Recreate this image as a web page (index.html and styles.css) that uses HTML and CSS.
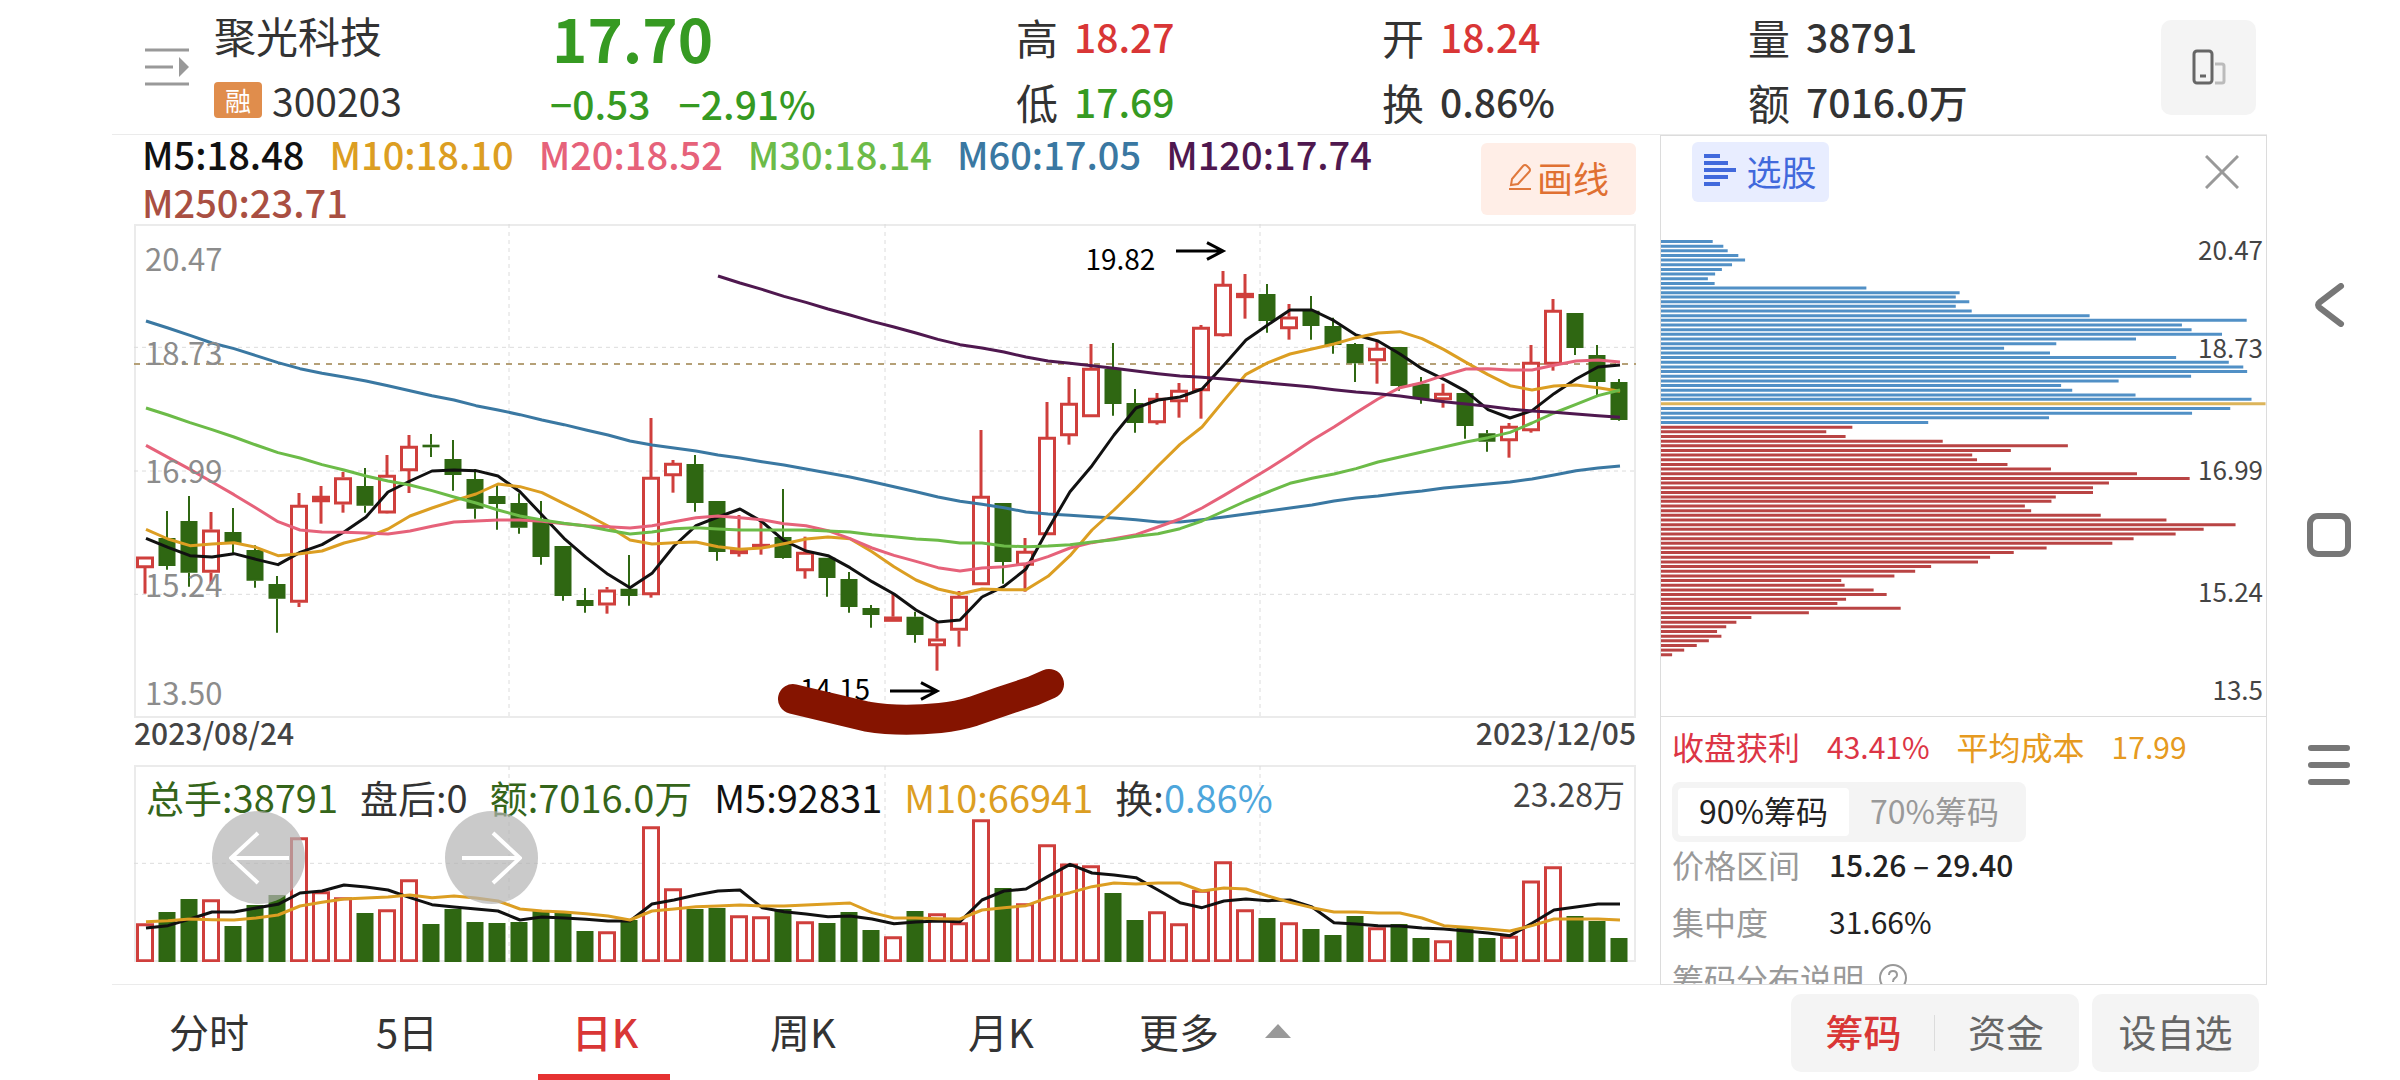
FILE: index.html
```html
<!DOCTYPE html>
<html lang="zh-CN">
<head>
	<meta charset="UTF-8">
	<meta name="viewport" content="width=device-width, initial-scale=1.0">
	<title>聚光科技 300203</title>
	<link rel="stylesheet" href="styles.css">
</head>
<body>
	<div class="app">
		<header class="quote">
			<button class="list-btn" aria-label="列表">
				<svg width="44" height="38" viewBox="0 0 44 38" fill="none" stroke="#999" stroke-width="3">
					<path d="M0 2H44M0 19H28M0 36H44"/>
					<path d="M34 9L44 19L34 29Z" fill="#999" stroke="none"/>
				</svg>
			</button>
			<div class="stock">
				<div class="stock-name">聚光科技</div>
				<div class="stock-code"><span class="tag">融</span>300203</div>
			</div>
			<div class="price">
				<div class="price-now">17.70</div>
				<div class="price-change"><span>−0.53</span><span>−2.91%</span></div>
			</div>
			<dl class="stat">
				<div><dt>高</dt><dd class="up">18.27</dd></div>
				<div><dt>低</dt><dd class="down">17.69</dd></div>
			</dl>
			<dl class="stat">
				<div><dt>开</dt><dd class="up">18.24</dd></div>
				<div><dt>换</dt><dd>0.86%</dd></div>
			</dl>
			<dl class="stat">
				<div><dt>量</dt><dd>38791</dd></div>
				<div><dt>额</dt><dd>7016.0万</dd></div>
			</dl>
			<button class="rotate-btn" aria-label="竖屏">
				<svg width="34" height="36" viewBox="0 0 34 36" fill="none" stroke-width="3">
					<rect x="2" y="2" width="18" height="32" rx="3" stroke="#666"/>
					<path d="M8 27H14" stroke="#666"/>
					<path d="M23 15H30Q32 15 32 17V32Q32 34 30 34H23" stroke="#bbb"/>
				</svg>
			</button>
		</header>

		<main class="charts">
			<div class="legend">
				<div class="legend-list">
					<span class="ma5">M5:18.48</span>
					<span class="ma10">M10:18.10</span>
					<span class="ma20">M20:18.52</span>
					<span class="ma30">M30:18.14</span>
					<span class="ma60">M60:17.05</span>
					<span class="ma120">M120:17.74</span>
					<span class="ma250">M250:23.71</span>
				</div>
				<button class="draw-btn">
					<svg width="24" height="28" viewBox="0 0 24 28" fill="none" stroke="#e0783c" stroke-width="2">
						<path d="M3 22L4 16L15 3Q17 1 19 3L21 5Q23 7 21 9L10 21Z"/>
						<path d="M1 26H23"/>
					</svg>
					画线
				</button>
			</div>

			<div class="kline">
				<svg id="kline" viewBox="0 12 1502 1482" preserveAspectRatio="none"></svg>
				<span class="axis axis1">20.47</span>
				<span class="axis axis2">18.73</span>
				<span class="axis axis3">16.99</span>
				<span class="axis axis4">15.24</span>
				<span class="axis axis5">13.50</span>
				<span class="mark mark-high">19.82</span>
				<span class="mark mark-low">14.15</span>
				<svg class="brush" viewBox="0 12 1502 1482" preserveAspectRatio="none">
					<path d="M659 1437L733 1490Q765 1506 806 1494Q824 1488 839 1474L866 1446L899 1413L915 1392"/>
				</svg>
			</div>
			<div class="dates"><span>2023/08/24</span><span>2023/12/05</span></div>

			<div class="volume">
				<svg id="volume" viewBox="0 75 1502 591" preserveAspectRatio="none"></svg>
				<div class="volume-legend">
					<span class="vol-green">总手:38791</span>
					<span>盘后:0</span>
					<span class="vol-green">额:7016.0万</span>
					<span class="ma5">M5:92831</span>
					<span class="ma10">M10:66941</span>
					<span>换:<span class="vol-rate">0.86%</span></span>
					<span class="volume-max">23.28万</span>
				</div>
				<button class="step step-prev" aria-label="向左">
					<svg width="60" height="54" viewBox="0 0 60 54" fill="none" stroke="#fff" stroke-width="4"><path d="M60 27H2M29 2L2 27L29 52"/></svg>
				</button>
				<button class="step step-next" aria-label="向右">
					<svg width="60" height="54" viewBox="0 0 60 54" fill="none" stroke="#fff" stroke-width="4"><path d="M0 27H58M31 2L58 27L31 52"/></svg>
				</button>
			</div>
		</main>

		<aside class="chips">
			<div class="chips-chart">
				<svg id="chips" viewBox="41 405 1252 1743" preserveAspectRatio="none"></svg>
				<div class="chips-top">
					<button class="pick-btn">
						<svg width="32" height="32" viewBox="0 0 32 32" stroke="#4169dc" stroke-width="4"><path d="M0 2H16M0 9H24M0 16H32M0 23H24M0 30H16"/></svg>
						选股
					</button>
					<button class="close-btn" aria-label="关闭">
						<svg width="34" height="34" viewBox="0 0 34 34" stroke="#999" stroke-width="3"><path d="M1 1L33 33M33 1L1 33"/></svg>
					</button>
				</div>
				<span class="chip-axis axis1">20.47</span>
				<span class="chip-axis axis2">18.73</span>
				<span class="chip-axis axis3">16.99</span>
				<span class="chip-axis axis4">15.24</span>
				<span class="chip-axis axis5">13.5</span>
			</div>
			<div class="chips-info">
				<div class="chips-sum">
					<span class="profit">收盘获利</span><span class="profit num">43.41%</span>
					<span class="cost">平均成本</span><span class="cost num">17.99</span>
				</div>
				<div class="segment">
					<button class="on">90%筹码</button>
					<button>70%筹码</button>
				</div>
				<dl class="chips-rows">
					<dt>价格区间</dt><dd class="strong">15.26 – 29.40</dd>
					<dt>集中度</dt><dd>31.66%</dd>
				</dl>
				<div class="chips-help">筹码分布说明
					<svg width="30" height="30" viewBox="0 0 30 30" fill="none" stroke="#999" stroke-width="2"><circle cx="15" cy="15" r="13"/><path d="M11 12Q11 8 15 8Q19 8 19 12Q19 14 17 15Q15 16 15 19M15 21V23"/></svg>
				</div>
			</div>
		</aside>

		<footer class="bottom">
			<nav class="tabs">
				<button>分时</button>
				<button>5日</button>
				<button class="on">日K</button>
				<button>周K</button>
				<button>月K</button>
				<button class="more">更多
					<svg width="26" height="14" viewBox="0 0 26 14"><path d="M13 0L26 14H0Z" fill="#999"/></svg>
				</button>
			</nav>
			<div class="pair">
				<button class="on">筹码</button>
				<button>资金</button>
			</div>
			<button class="watch-btn">设自选</button>
		</footer>

		<nav class="sysnav">
			<button aria-label="返回"><svg width="44" height="44" viewBox="0 0 44 44"><path d="M34 3L13 19Q9 22 13 25L34 41"/></svg></button>
			<button aria-label="主页"><svg width="44" height="44" viewBox="0 0 44 44"><rect x="3" y="3" width="38" height="38" rx="8"/></svg></button>
			<button aria-label="任务"><svg width="44" height="44" viewBox="0 0 44 44"><path d="M4 5H40M4 22H40M4 39H40"/></svg></button>
		</nav>
	</div>
	<script src="script.js"></script>
</body>
</html>
```
FILE: styles.css
```css
* {
	box-sizing: border-box;
}
body {
	margin: 0;
	background: #fff;
	color: #333;
	font-family: "Noto Sans CJK SC", "Noto Sans", sans-serif;
}
button {
	border: none;
	padding: 0;
	background: none;
	color: inherit;
	font: inherit;
	display: flex;
	align-items: center;
	justify-content: center;
}
dl, dd {
	margin: 0;
}
svg {
	display: block;
	flex: none;
}

.app {
	display: grid;
	grid-template-columns: minmax(0, 1fr) 607px 133px;
	grid-template-areas:
		"quote quote sys"
		"charts chips sys"
		"bottom bottom sys";
	padding-left: 112px;
	min-height: 100vh;
	grid-template-rows: 135px 850px auto;
}

/* header */
.quote {
	grid-area: quote;
	display: flex;
	align-items: center;
	border-bottom: 1px solid #ebebeb;
	padding: 0 11px 0 33px;
}
.list-btn {
	width: 44px;
	margin-right: 25px;
}
.stock {
	width: 336px;
}
.stock-name {
	font-size: 42px;
	line-height: 66px;
}
.stock-code {
	display: flex;
	align-items: center;
	gap: 10px;
	font-size: 39px;
	line-height: 64px;
}
.tag {
	width: 48px;
	height: 36px;
	border-radius: 4px;
	background: #e08d4c;
	color: #fff;
	font-size: 26px;
	line-height: 36px;
	text-align: center;
}
.price {
	width: 466px;
	color: #369a22;
	font-weight: 500;
}
.price-now {
	font-size: 60px;
	font-weight: 700;
	line-height: 72px;
	padding-left: 2px;
}
.price-change {
	display: flex;
	gap: 28px;
	font-size: 39px;
	line-height: 60px;
}
.stat {
	width: 366px;
	padding-top: 4px;
}
.stat div {
	display: flex;
	align-items: center;
	gap: 16px;
	font-size: 39px;
	line-height: 65px;
}
.stat dt {
	font-size: 42px;
}
.stat dd {
	font-weight: 500;
}
.up {
	color: #d93636;
}
.down {
	color: #369a22;
}
.rotate-btn {
	width: 95px;
	height: 95px;
	margin-left: auto;
	border-radius: 10px;
	background: #f4f4f4;
}

/* left charts */
.charts {
	grid-area: charts;
	padding: 0 24px 0 22px;
	border-bottom: 1px solid #ebebeb;
}
.legend {
	display: flex;
	justify-content: space-between;
	height: 89px;
	padding-left: 8px;
}
.legend-list {
	display: flex;
	flex-wrap: wrap;
	column-gap: 25px;
	width: 1280px;
	font-size: 38px;
	font-weight: 500;
	line-height: 48px;
	margin-top: -5px;
}
.ma5 { color: #111; }
.ma10 { color: #dc9e22; }
.ma20 { color: #e6627a; }
.ma30 { color: #6cbb48; }
.ma60 { color: #3a78a2; }
.ma120 { color: #4f184f; }
.ma250 { color: #a94f42; }
.draw-btn {
	width: 155px;
	height: 72px;
	margin-top: 8px;
	padding-bottom: 4px;
	gap: 5px;
	border-radius: 6px;
	background: #ffeee7;
	color: #e07032;
	font-size: 36px;
}
.kline, .volume {
	position: relative;
}
.kline {
	height: 494px;
}
.kline svg, .volume > svg {
	width: 100%;
	height: 100%;
}
.axis, .mark, .chip-axis {
	position: absolute;
	line-height: 28px;
}
.axis {
	left: 11px;
	color: #8c8c8c;
	font-size: 31px;
}
.kline .axis1 { top: 4%; }
.kline .axis2 { top: 23%; }
.kline .axis3 { top: 47%; }
.kline .axis4 { top: 70%; }
.kline .axis5 { top: 92%; }
.mark {
	right: 32%;
	color: #000;
	font-size: 28px;
}
.mark-high {
	top: 4%;
}
.mark-low {
	right: 51%;
	top: 91%;
}
.kline .brush {
	position: absolute;
	inset: 0;
	overflow: visible;
	pointer-events: none;
	fill: none;
	stroke: #851400;
	stroke-width: 30px;
	stroke-linecap: round;
	stroke-linejoin: round;
}
.dates {
	display: flex;
	justify-content: space-between;
	height: 47px;
	font-size: 30px;
	font-weight: 500;
	line-height: 28px;
	color: #444;
}
.volume {
	height: 197px;
}
.volume-legend {
	position: absolute;
	top: 5px;
	left: 12px;
	right: 11px;
	display: flex;
	gap: 22px;
	font-size: 38px;
	line-height: 54px;
}
.vol-green { color: #35651a; }
.vol-rate { color: #4da6dc; }
.volume-max {
	margin-left: auto;
	font-size: 32px;
	line-height: 46px;
	color: #444;
}
.step {
	position: absolute;
	top: 46px;
	width: 93px;
	height: 93px;
	border-radius: 50%;
	background: rgba(180, 180, 180, 0.7);
}
.step-prev { left: 78px; }
.step-next { left: 311px; }

/* svg parts */
svg path, svg rect, svg line, svg polyline {
	vector-effect: non-scaling-stroke;
}
.frame, .grid {
	fill: none;
	stroke: #ebebeb;
	stroke-width: 2;
}
.grid {
	stroke: #dcdcdc;
	stroke-width: 1;
	stroke-dasharray: 4 4;
}
.last {
	stroke: #b5a077;
	stroke-width: 2;
	stroke-dasharray: 6 6;
}
.r {
	fill: #fff;
	stroke: #cf3f3c;
	stroke-width: 3;
}
.r.flat {
	fill: #e03030;
}
.g {
	fill: #2f6712;
	stroke: #2f6712;
	stroke-width: 2;
}
.line {
	fill: none;
	stroke: currentColor;
	stroke-width: 3;
	stroke-linejoin: round;
}
.arrow {
	fill: none;
	stroke: #000;
	stroke-width: 3;
}
.bar-blue { stroke: #5190c6; }
.bar-gold { stroke: #dcb45a; }
.bar-red { stroke: #b94444; }
.bar-blue, .bar-gold, .bar-red {
	stroke-width: 3;
}

/* right panel */
.chips {
	grid-area: chips;
	display: flex;
	flex-direction: column;
	border: 1px solid #dcdcdc;
}
.chips-chart {
	position: relative;
	height: 580px;
}
.chips-chart > svg {
	position: absolute;
	width: 100%;
	height: 100%;
}
.chips-top {
	position: relative;
	display: flex;
	justify-content: space-between;
	padding: 6px 27px 0 31px;
}
.pick-btn {
	width: 137px;
	height: 60px;
	gap: 10px;
	padding-bottom: 4px;
	border-radius: 6px;
	background: #e8edff;
	color: #4169dc;
	font-size: 35px;
}
.chip-axis {
	right: 3px;
	font-size: 26px;
	color: #444;
}
.chips .axis1 { top: 17%; }
.chips .axis2 { top: 34%; }
.chips .axis3 { top: 55%; }
.chips .axis4 { top: 76%; }
.chips .axis5 { top: 93%; }
.chips-info {
	flex: 1;
	height: 0;
	overflow: hidden;
	border-top: 1px solid #dcdcdc;
	padding-left: 11px;
	font-size: 32px;
}
.chips-sum {
	display: flex;
	line-height: 58px;
}
.chips-sum span {
	margin-right: 27px;
}
.chips-sum .num {
	font-size: 30px;
}
.profit { color: #dc3545; }
.cost { color: #e69a20; }
.segment {
	display: flex;
	width: 354px;
	height: 60px;
	margin-top: 7px;
	padding: 6px;
	border-radius: 8px;
	background: #f4f4f4;
	color: #999;
}
.segment button {
	flex: 1;
	padding-bottom: 4px;
	border-radius: 4px;
}
.segment .on {
	background: #fff;
	color: #222;
}
.chips-rows {
	display: grid;
	grid-template-columns: 157px 1fr;
	line-height: 57px;
	margin-top: -6px;
}
.chips-rows dt, .chips-help {
	color: #999;
}
.chips-rows dd {
	color: #222;
	font-size: 30px;
}
.chips-rows .strong {
	font-weight: 500;
}
.chips-help {
	display: flex;
	align-items: center;
	gap: 14px;
	line-height: 56px;
}

/* bottom bar */
.bottom {
	grid-area: bottom;
	display: flex;
	align-items: center;
	padding-right: 8px;
	font-size: 38px;
}
.bottom button {
	padding-bottom: 4px;
}
.tabs {
	display: flex;
	align-self: stretch;
	margin-right: auto;
	margin-left: -2px;
	font-size: 40px;
}
.tabs button {
	position: relative;
	width: 198px;
}
.tabs .on, .pair .on {
	color: #d93636;
	font-weight: 500;
}
.tabs .on::after {
	content: "";
	position: absolute;
	left: 32px;
	right: 34px;
	bottom: 0;
	height: 6px;
	background: #e63232;
}
.tabs .more {
	width: 230px;
	gap: 46px;
}
.pair, .watch-btn {
	height: 78px;
	border-radius: 10px;
	background: #f4f4f4;
	color: #666;
}
.pair {
	display: flex;
	align-items: center;
	margin-right: 13px;
	padding: 0 2px;
}
.pair button {
	width: 142px;
	height: 36px;
}
.pair .on {
	border-right: 1px solid #dcdcdc;
}
.watch-btn {
	width: 167px;
}

/* system keys */
.sysnav {
	grid-area: sys;
	display: flex;
	flex-direction: column;
	align-items: center;
	justify-content: center;
	gap: 186px;
	padding: 0 10px 10px 0;
}
.sysnav svg {
	fill: none;
	stroke: #777;
	stroke-width: 6;
	stroke-linecap: round;
}
```
FILE: script.js
```js
// colour, high, body top, body bottom, low
var candles = [
	['r',1010,1010,1044,1121], ['g',873,954,1038,1049], ['g',828,903,1058,1100], ['r',876,929,1058,1093],
	['g',864,936,970,1000], ['g',976,990,1082,1103], ['g',1068,1092,1136,1238], ['r',819,855,1148,1161],
	['r',798,828,846,911], ['r',756,772,853,878], ['g',744,798,857,878], ['r',705,765,880,881],
	['r',645,678,753,819], ['g',642,674,682,711], ['g',660,717,765,812], ['g',747,777,866,896],
	['g',795,828,852,929], ['g',820,849,923,941], ['g',843,899,1011,1034], ['g',978,978,1128,1142],
	['g',1104,1140,1158,1178], ['r',1101,1109,1156,1181], ['g',1005,1106,1128,1157], ['r',594,771,1125,1133],
	['r',720,729,768,818], ['g',705,732,849,875], ['g',843,843,996,1022], ['r',885,988,1002,1010],
	['r',905,972,984,1004], ['g',807,951,1014,1016], ['r',950,996,1053,1076], ['g',1013,1013,1074,1130],
	['g',1056,1077,1161,1178], ['g',1155,1164,1185,1223], ['r',1120,1190,1205,1205], ['g',1175,1190,1245,1268],
	['r',1208,1256,1278,1352], ['r',1113,1128,1232,1280], ['r',630,828,1095,1095], ['g',849,849,1026,1091],
	['r',954,993,1037,1115], ['r',546,651,945,945], ['r',471,549,648,674], ['r',372,444,591,591],
	['g',369,447,552,587], ['g',507,549,609,638], ['r',519,534,609,614], ['r',489,510,546,593],
	['r',315,321,513,596], ['r',153,192,348,350], ['r',162,219,234,296], ['g',192,222,303,338],
	['r',252,290,327,359], ['g',228,272,318,359], ['g',293,318,375,401], ['g',369,372,430,486],
	['r',366,384,423,491], ['g',381,381,498,512], ['g',471,491,537,551], ['r',491,519,540,563],
	['g',519,519,618,656], ['g',630,640,665,695], ['r',609,618,663,713], ['r',375,426,633,638],
	['r',237,270,434,452], ['g',279,279,384,405], ['g',375,405,486,525], ['g',477,486,600,602]
];
var averages = {
	ma60: [303,324,346,369,386,407,428,446,460,471,483,497,512,527,540,557,570,584,600,614,630,645,663,675,684,693,705,714,725,735,747,759,771,785,800,815,831,844,853,863,876,882,886,890,894,899,906,906,899,891,882,873,864,855,843,834,828,820,813,804,798,792,786,777,765,752,744,738],
	ma5: [955,982,1007,1011,1001,1018,1034,997,974,936,891,816,783,753,750,752,768,815,885,955,1012,1063,1103,1060,978,917,891,867,905,962,993,1007,1043,1085,1122,1170,1206,1200,1131,1099,1047,928,815,737,645,564,540,531,507,435,360,314,270,270,302,345,363,402,446,478,514,569,594,572,521,477,441,435],
	ma10: [928,957,977,972,968,982,1007,1001,993,969,953,927,888,864,842,822,792,800,818,851,883,918,960,972,968,966,980,988,984,971,957,951,956,995,1040,1080,1107,1122,1107,1109,1109,1069,1007,930,870,806,738,673,621,541,463,428,402,387,372,353,339,335,356,389,427,464,497,510,498,495,503,514],
	ma20: [676,712,748,786,824,864,905,930,936,937,939,942,933,919,906,903,900,900,904,911,917,920,924,917,905,893,888,893,899,911,917,932,956,984,1006,1024,1043,1053,1044,1040,1031,1010,984,968,956,944,921,897,864,826,787,747,705,661,621,578,537,503,488,466,447,446,450,450,436,423,420,426],
	ma30: [564,585,608,629,651,675,698,714,734,750,768,783,795,812,831,849,870,888,900,910,918,931,942,936,926,923,927,930,930,930,930,933,936,944,950,957,961,969,969,978,980,978,974,966,959,949,941,926,903,873,843,816,790,775,762,746,726,711,696,681,666,653,637,609,579,553,527,510],
	ma120: [168,189,208,229,247,267,285,304,321,339,358,374,384,396,411,423,430,437,445,453,461,468,472,477,483,489,495,501,509,516,521,528,537,545,552,559,567,573,577,582,587,592]
};
// top of each bar, same days as the candles
var volumes = [
	550,516,477,478,558,495,465,292,454,472,519,508,418,552,507,546,549,546,513,519,573,574,540,259,445,507,504,526,529,507,544,549,516,570,
	589,513,520,547,238,444,490,313,371,376,459,540,514,550,450,364,508,534,547,567,585,528,562,552,594,601,564,594,588,422,379,528,543,594
];
var volumeAverages = {
	ma5: [564,557,537,516,516,504,493,459,453,435,441,450,473,494,501,507,513,540,531,534,538,543,543,492,480,465,453,450,503,515,522,530,528,537,551,546,543,545,480,453,447,409,373,399,405,413,450,488,503,483,477,482,480,501,548,552,557,558,564,567,573,579,587,550,510,501,492,492],
	ma10: [545,542,537,539,540,534,525,498,487,477,474,471,465,473,468,474,483,507,513,516,521,528,540,513,507,500,498,495,498,498,495,492,489,518,534,534,536,537,510,503,497,473,458,440,429,432,429,429,453,444,447,468,487,503,516,516,519,519,534,557,562,567,573,557,537,537,537,540]
};
var chips = [
	148,170,179,201,215,188,167,153,138,152,466,659,651,679,651,684,928,1253,1119,1139,1202,1024,859,751,846,1107,1216,1246,1254,1138,988,869,892,1023,1263,
	1292,1219,1140,844,594,437,383,423,624,883,765,685,695,758,848,1026,1135,968,935,935,858,849,794,807,951,1087,1230,1164,1106,1019,975,839,771,722,697,
	600,567,524,414,421,481,508,424,406,537,347,228,197,176,157,166,140,115,89,64
];

function dayX(i) {
	return 11 + 22 * i;
}
function line(x1, y1, x2, y2, cls) {
	return '<line class="' + cls + '" x1="' + x1 + '" y1="' + y1 + '" x2="' + x2 + '" y2="' + y2 + '"/>';
}
function curve(values, cls) {
	var first = candles.length - values.length;
	var points = values.map(function (v, i) {
		return (dayX(first + i) + 1) + ',' + v;
	});
	return '<polyline class="line ' + cls + '" points="' + points.join(' ') + '"/>';
}
function body(x, top, bottom, color) {
	if (color == 'g') {
		return '<rect class="g" x="' + (x - 7.5) + '" y="' + (top + 3) + '" width="15" height="' + (bottom - top - 6) + '"/>';
	}
	var flat = bottom - top < 20 ? ' flat' : '';
	return '<rect class="r' + flat + '" x="' + (x - 7.5) + '" y="' + (top + 4) + '" width="15" height="' + (bottom - top - 8) + '"/>';
}

function drawKline() {
	var out = '<rect class="frame" x="1" y="15" width="1500" height="1476"/>';
	[382, 753, 1123].forEach(function (y) { out += line(0, y, 1502, y, 'grid'); });
	[375, 751, 1126].forEach(function (x) { out += line(x, 12, x, 1491, 'grid'); });
	out += line(0, 432, 1502, 432, 'last');
	candles.forEach(function (c, i) {
		var x = dayX(i);
		out += line(x, c[1], x, c[2], c[0]) + line(x, c[3], x, c[4], c[0]) + body(x, c[2], c[3], c[0]);
	});
	for (var name in averages) {
		out += curve(averages[name], name);
	}
	out += '<path class="arrow" d="M1042 93H1089M1073 68L1089 93L1073 118"/>';
	out += '<path class="arrow" d="M756 1413H803M787 1388L803 1413L787 1438"/>';
	document.getElementById('kline').innerHTML = out;
}

function drawVolume() {
	var out = '<path class="frame" d="M1 663V78H1501V663Z"/>';
	out += line(0, 370, 1502, 370, 'grid');
	[375, 751, 1126].forEach(function (x) { out += line(x, 78, x, 664, 'grid'); });
	volumes.forEach(function (v, i) {
		out += body(dayX(i), v, 666, candles[i][0]);
	});
	out += curve(volumeAverages.ma5, 'ma5') + curve(volumeAverages.ma10, 'ma10');
	document.getElementById('volume').innerHTML = out;
}

function drawChips() {
	var out = '';
	chips.forEach(function (end, i) {
		var y = Math.round(722 + i * 13.955);
		var cls = i == 35 ? 'bar-gold' : (i < 40 ? 'bar-blue' : 'bar-red');
		out += line(41, y, end, y, cls);
	});
	document.getElementById('chips').innerHTML = out;
}

drawKline();
drawVolume();
drawChips();
```
